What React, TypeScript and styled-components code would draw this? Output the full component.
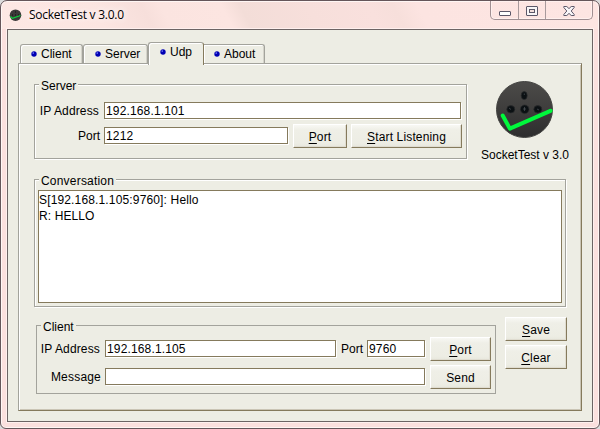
import React from "react";
import styled, { createGlobalStyle } from "styled-components";

const FACE = "#ededE4";
const OLIVE = "#857a5c";
const GRAY = "#a3a39c";

const Global = createGlobalStyle`
  * { box-sizing: border-box; }
  body { margin: 0; background: #dcdcdc; overflow: hidden; }
  #root { font: 12px/14px "Liberation Sans", Arial, sans-serif; color: #000; }
`;

const Frame = styled.div`
  width: 600px;
  height: 429px;
  border: 1px solid #65565a;
  border-radius: 7px 7px 6px 6px;
  padding: 0 6px 6px;
  display: flex;
  flex-direction: column;
  box-shadow: inset 0 0 0 1px #fff6f4;
  background:
    linear-gradient(62deg, #fde8e4 0%, #fce5e1 17%, #f7dfdb 25%, #fbe4e0 28%, #fce5e1 38%, #f3ddd8 41%, #f7dfdb 52%, #f9e0dd 62%, #f7dfdb 66%, #fce4e1 70%, #fde5e2 100%) 0 0 / 100% 28px no-repeat,
    #fbe0de;
`;

const TitleBar = styled.header`
  height: 28px;
  flex: none;
  display: flex;
  align-items: flex-start;
  padding-left: 2px;
`;

const TitleIcon = styled.span`
  display: flex;
  margin: 8px 7px 0 0;
`;

const Title = styled.h1`
  margin: 5px 0 0;
  flex: 1;
  font: 12px/18px "Open Sans", "Noto Sans", sans-serif;
  letter-spacing: -0.25px;
  text-shadow: 0 0 6px #fff, 0 0 8px #fff;
`;

const Caption = styled.div`
  display: flex;
  width: 103px;
  height: 19px;
  border: 1px solid #a08f92;
  border-top: 0;
  border-radius: 0 0 5px 5px;
  box-shadow: inset 0 0 0 1px #fff0ee;
`;

const CaptionButton = styled.button<{ $w: number }>`
  width: ${(p) => p.$w}px;
  height: 18px;
  padding: 1px 0 0;
  border: 0;
  background: none;
  display: flex;
  align-items: center;
  justify-content: center;
  & + & { border-left: 1px solid #a89a9c; }
`;

const Client = styled.main`
  flex: 1;
  border: 1px solid #6c6464;
  box-shadow: 0 0 0 1px #fff0ee;
  background: ${FACE};
  padding: 12px 10px 10px;
  display: flex;
  flex-direction: column;
`;

const Tabs = styled.nav`
  height: 21px;
  flex: none;
  display: flex;
  align-items: flex-end;
  padding-left: 2px;
  position: relative;
  z-index: 1;
`;

const Tab = styled.button<{ $w: number; $active?: boolean; $gap: number }>`
  width: ${(p) => p.$w}px;
  height: ${(p) => (p.$active ? 23 : 19)}px;
  flex: none;
  margin: 0 0 ${(p) => (p.$active ? -2 : 0)}px;
  padding: 0 0 ${(p) => (p.$active ? 4 : 0)}px ${(p) => p.$gap}px;
  font: inherit;
  color: inherit;
  display: flex;
  align-items: center;
  gap: 4px;
  background: ${FACE};
  border: 1px solid ${GRAY};
  border-right-color: ${(p) => (p.$active ? OLIVE : GRAY)};
  border-bottom: 0;
  border-radius: 3px 3px 0 0;
  box-shadow: inset 1px 1px 0 #fff${(p) => (p.$active ? "" : ", inset -1px 0 0 #d4d3ca")};
  &:last-child { border-left: 0; border-top-left-radius: 0; }
`;

const Pane = styled.section`
  height: 348px;
  flex: none;
  width: 564px;
  border: 1px solid;
  border-color: ${GRAY} ${OLIVE} ${OLIVE} ${GRAY};
  box-shadow: inset 1px 1px 0 #fff, inset -1px -1px 0 #cac5b5;
  padding: 20px 0 0 15px;
`;

const TopRow = styled.div`
  height: 75px;
  display: flex;
  align-items: flex-start;
`;

const Group = styled.section<{ $w: number; $h: number; $top?: number; $soft?: boolean }>`
  width: ${(p) => p.$w}px;
  height: ${(p) => p.$h}px;
  flex: none;
  margin-top: ${(p) => p.$top ?? 0}px;
  border: 1px solid ${GRAY};
  box-shadow: ${(p) => (p.$soft ? "none" : "1px 1px 0 #fff, inset 1px 1px 0 #fff")};
  display: flex;
  flex-direction: column;
`;

const Legend = styled.h2<{ $ls?: number }>`
  align-self: flex-start;
  flex: none;
  margin: -6px 0 0 4px;
  height: 14px;
  padding: 0 2px;
  font: inherit;
  background: ${FACE};
  letter-spacing: ${(p) => p.$ls ?? 0}px;
`;

const Row = styled.div<{ $top?: number }>`
  height: 25px;
  flex: none;
  margin-top: ${(p) => p.$top ?? 0}px;
  display: flex;
  align-items: center;
`;

const Label = styled.label<{ $w: number; $ls?: number; $pad?: number }>`
  width: ${(p) => p.$w}px;
  padding: 1px ${(p) => p.$pad ?? 4}px 0 0;
  text-align: right;
  white-space: nowrap;
  letter-spacing: ${(p) => p.$ls ?? 0}px;
`;

const Field = styled.input<{ $w: number }>`
  width: ${(p) => p.$w}px;
  height: 17px;
  padding: 1px 1px 0;
  border: 1px solid ${OLIVE};
  box-shadow: 1px 1px 0 #fff;
  background: #fff;
  border-radius: 0;
  outline: 0;
  font: inherit;
  color: inherit;
  letter-spacing: 0.15px;
`;

const Button = styled.button<{ $w: number; $left?: number }>`
  width: ${(p) => p.$w}px;
  height: 24px;
  flex: none;
  align-self: flex-end;
  margin-left: ${(p) => p.$left ?? 0}px;
  padding: 1px 0 0;
  font: inherit;
  color: inherit;
  letter-spacing: 0.15px;
  border: 1px solid;
  border-color: #fff ${OLIVE} ${OLIVE} #fff;
  box-shadow: inset -1px -1px 0 #dfdcd0;
  background: linear-gradient(#f8f8f4, #efefe7 5px, #ededE4 18px, #e7e7dd);
  u { text-underline-offset: 2px; text-decoration-thickness: 1px; text-decoration-skip-ink: none; }
`;

const Brand = styled.div`
  width: 116px;
  flex: none;
  margin-top: -3px;
  display: flex;
  flex-direction: column;
  align-items: center;
  gap: 9px;
  white-space: nowrap;
`;

const Log = styled.div`
  width: 524px;
  height: 113px;
  flex: none;
  margin: 2px 0 0 3px;
  padding: 1px 0 0;
  border: 1px solid ${OLIVE};
  background: #fff;
  line-height: 16px;
`;

const Line = styled.p<{ $ls: number }>`
  margin: 0;
  letter-spacing: ${(p) => p.$ls}px;
`;

const BottomRow = styled.div`
  margin: 10px 0 0 2px;
  display: flex;
  align-items: flex-start;
`;

const Actions = styled.div`
  margin-left: 9px;
  display: flex;
  flex-direction: column;
  gap: 4px;
`;

const Ball = () => (
  <svg width="6" height="6" viewBox="0 0 6 6">
    <circle cx="3" cy="3" r="2.7" fill="#0000b4" />
    <circle cx="2.2" cy="2.1" r=".8" fill="#7d86ff" />
  </svg>
);

const Socket = () => (
  <svg width="58" height="58" viewBox="0 0 58 58">
    <defs>
      <linearGradient id="disc" x1="0" y1="0" x2="0" y2="1">
        <stop offset="0" stopColor="#4c4b49" />
        <stop offset=".5" stopColor="#3e3d3c" />
        <stop offset="1" stopColor="#2d2d2e" />
      </linearGradient>
    </defs>
    <circle cx="28.5" cy="28.5" r="28" fill="url(#disc)" stroke="#444442" />
    <g fill="#0b1013" stroke="#292b2c" strokeWidth=".7">
      <ellipse cx="28.2" cy="14.6" rx="3" ry="4" />
      <ellipse cx="14.8" cy="28.3" rx="4" ry="3.7" />
      <circle cx="28.7" cy="28.3" r="4.3" />
      <ellipse cx="41.8" cy="28.3" rx="4" ry="3.7" />
    </g>
    <path d="M27 28h3M28.5 26v4M28.3 12.5v1.5M13 27l2 1.5M41 28l2 1" stroke="#50565a" strokeWidth=".7" />
    <path d="M6.7 34.5 13.8 47.6 54.5 29.8" fill="none" stroke="#00f83c" strokeWidth="4" strokeLinecap="round" strokeLinejoin="round" />
  </svg>
);

const SmallSocket = () => (
  <svg width="13" height="13" viewBox="0 0 13 13">
    <circle cx="6.5" cy="6.2" r="5.8" fill="#3b3939" />
    <path d="M3 6h1M6 6h1M9 6h1M6 3h1" stroke="#111" />
    <path d="M1.5 7.5 3.5 9.3 11.5 6.5" fill="none" stroke="#09d33a" strokeWidth="1.1" />
  </svg>
);

export default function App() {
  return (
    <>
      <Global />
      <Frame>
        <TitleBar>
          <TitleIcon><SmallSocket /></TitleIcon>
          <Title>SocketTest v 3.0.0</Title>
          <Caption>
            <CaptionButton $w={27} aria-label="Minimize">
              <svg width="12" height="10"><rect x=".5" y="5.5" width="11" height="4" rx=".5" fill="#fff" stroke="#5b5768" /></svg>
            </CaptionButton>
            <CaptionButton $w={27} aria-label="Maximize">
              <svg width="12" height="10">
                <rect x=".5" y=".5" width="11" height="9" rx=".5" fill="#f8f5f6" stroke="#5b5768" />
                <rect x="3.5" y="3.5" width="5" height="3" fill="#f3dfdc" stroke="#5b5768" />
              </svg>
            </CaptionButton>
            <CaptionButton $w={47} aria-label="Close">
              <svg width="12" height="10" viewBox="0 0 12 10">
                <path d="M.8.5h3L6 2.6 8.2.5h3v1L8.2 5l3 3.5v1h-3L6 7.4 3.8 9.5h-3v-1L3.8 5 .8 1.5Z" fill="#f8f6f8" stroke="#5b5768" />
              </svg>
            </CaptionButton>
          </Caption>
        </TitleBar>
        <Client>
          <Tabs>
            <Tab $w={63} $gap={10}><Ball />Client</Tab>
            <Tab $w={65} $gap={11}><Ball />Server</Tab>
            <Tab $w={56} $gap={11} $active><Ball />Udp</Tab>
            <Tab $w={61} $gap={10}><Ball />About</Tab>
          </Tabs>
          <Pane>
            <TopRow>
              <Group $w={433} $h={75}>
                <Legend>Server</Legend>
                <Row $top={5}>
                  <Label $w={69} $ls={0.15} $pad={5}>IP Address</Label>
                  <Field $w={357} defaultValue="192.168.1.101" />
                </Row>
                <Row>
                  <Label $w={69}>Port</Label>
                  <Field $w={184} defaultValue="1212" />
                  <Button $w={54} $left={5}><u>P</u>ort</Button>
                  <Button $w={111} $left={4}><u>S</u>tart Listening</Button>
                </Row>
              </Group>
              <Brand>
                <Socket />
                <span>SocketTest v 3.0</span>
              </Brand>
            </TopRow>
            <Group $w={532} $h={128} $top={20}>
              <Legend $ls={0.2}>Conversation</Legend>
              <Log>
                <Line $ls={0.15}>S[192.168.1.105:9760]: Hello</Line>
                <Line $ls={0.1}>R: HELLO</Line>
              </Log>
            </Group>
            <BottomRow>
              <Group $w={460} $h={69} $top={8} $soft>
                <Legend>Client</Legend>
                <Row $top={2}>
                  <Label $w={68} $ls={0.15} $pad={5}>IP Address</Label>
                  <Field $w={231} defaultValue="192.168.1.105" />
                  <Label $w={31}>Port</Label>
                  <Field $w={58} defaultValue="9760" />
                  <Button $w={61} $left={5}><u>P</u>ort</Button>
                </Row>
                <Row $top={3}>
                  <Label $w={68} $ls={0.2}>Message</Label>
                  <Field $w={320} />
                  <Button $w={61} $left={5}>Send</Button>
                </Row>
              </Group>
              <Actions>
                <Button $w={62}><u>S</u>ave</Button>
                <Button $w={62}><u>C</u>lear</Button>
              </Actions>
            </BottomRow>
          </Pane>
        </Client>
      </Frame>
    </>
  );
}
